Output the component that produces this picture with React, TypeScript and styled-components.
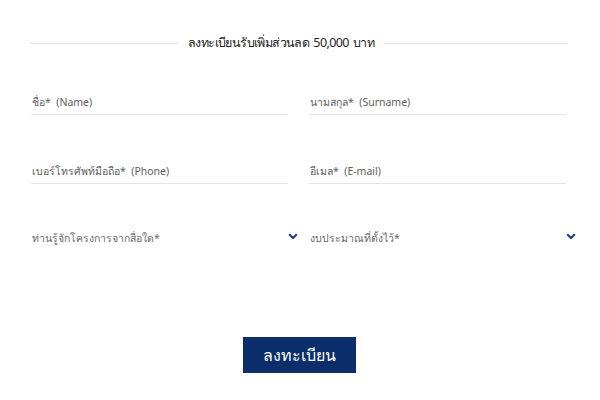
import React from "react";
import styled, { createGlobalStyle } from "styled-components";

const Global = createGlobalStyle`
  html, body { margin: 0; padding: 0; background: #ffffff; }
  body { font-family: "Noto Sans", "Open Sans", "DejaVu Sans", sans-serif; }
`;

const Page = styled.div`
  width: 600px;
  height: 400px;
  box-sizing: border-box;
  padding: 32px 0 0 30px;
  background: #fff;
`;

const TitleRow = styled.div`
  width: 538px;
  display: flex;
  align-items: center;
  gap: 10px;
`;

const Rule = styled.div<{ $w?: number }>`
  flex: ${(p) => (p.$w ? `0 0 ${p.$w}px` : "1")};
  height: 1px;
  background: #e6e6e6;
`;

const Title = styled.h2`
  margin: 0;
  font-size: 12.5px;
  font-weight: 400;
  letter-spacing: -0.6px;
  word-spacing: 1.5px;
  color: #262626;
  line-height: 22px;
  white-space: pre;
`;

const Grid = styled.div`
  margin-top: 29px;
  display: grid;
  grid-template-columns: 269px 269px;
  column-gap: 9px;
  row-gap: 37px;
  padding-left: 1px;
`;

const Field = styled.label`
  display: block;
  margin-right: 12px;
  border-bottom: 1px solid #e4e4e4;
  height: 32px;
  box-sizing: border-box;
`;

const Label = styled.span`
  display: block;
  padding: 12px 0 0 1px;
  font-size: 10.5px;
  line-height: 14px;
  color: #606060;
  white-space: pre;
`;

const Select = styled.div`
  display: flex;
  align-items: center;
  justify-content: space-between;
  height: 32px;
  margin-top: -1px;
  padding-right: 2px;
`;

const SelectText = styled.span`
  font-size: 10.5px;
  color: #6a6a6a;
  padding: 5px 0 0 1px;
`;

const Chevron = () => (
  <svg width="10" height="7" viewBox="0 0 10 7">
    <path d="M1.2 1.3 L5 5 L8.8 1.3" fill="none" stroke="#1c3f7c" strokeWidth="2.2" />
  </svg>
);

const ButtonRow = styled.div`
  width: 538px;
  display: flex;
  justify-content: center;
  margin-top: 85px;
`;

const Submit = styled.button`
  width: 113px;
  height: 36px;
  border: 0;
  background: #0c2f6b;
  color: #fff;
  font-family: inherit;
  font-size: 16px;
  font-weight: 400;
  cursor: pointer;
`;

export default function App() {
  return (
    <Page>
      <Global />
      <TitleRow>
        <Rule $w={148} />
        <Title>ลงทะเบียนรับเพิ่มส่วนลด 50,000 บาท</Title>
        <Rule />
      </TitleRow>
      <Grid>
        <Field><Label>ชื่อ*  (Name)</Label></Field>
        <Field><Label>นามสกุล*  (Surname)</Label></Field>
        <Field><Label>เบอร์โทรศัพท์มือถือ*  (Phone)</Label></Field>
        <Field><Label>อีเมล*  (E-mail)</Label></Field>
        <Select><SelectText>ท่านรู้จักโครงการจากสื่อใด*</SelectText><Chevron /></Select>
        <Select><SelectText>งบประมาณที่ตั้งไว้*</SelectText><Chevron /></Select>
      </Grid>
      <ButtonRow>
        <Submit>ลงทะเบียน</Submit>
      </ButtonRow>
    </Page>
  );
}
